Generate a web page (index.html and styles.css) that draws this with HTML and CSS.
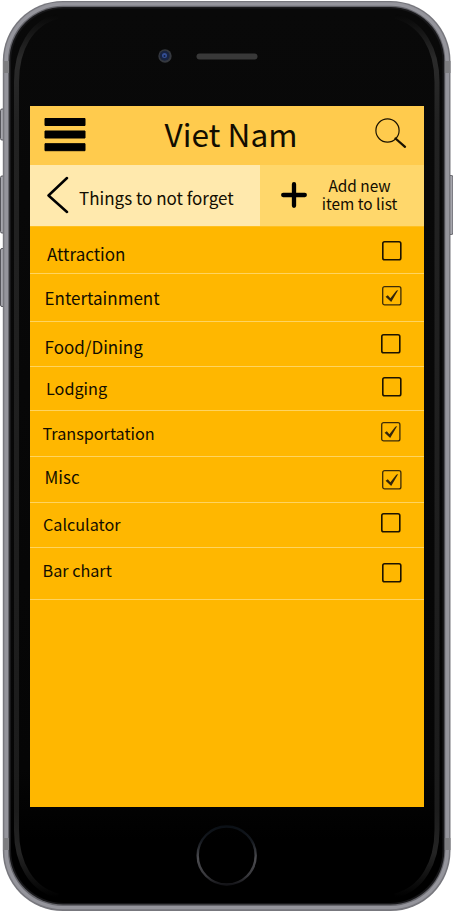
FILE: index.html
```html
<!DOCTYPE html>
<html lang="en">
<head>
<meta charset="utf-8">
<title>Viet Nam</title>
<link rel="stylesheet" href="styles.css">
</head>
<body>
<svg width="0" height="0" class="defs" aria-hidden="true">
  <symbol id="box" viewBox="0 0 20 20"><rect x=".8" y=".8" width="18" height="18" rx="1.8" fill="none" stroke="#1c1300" stroke-width="1.6"/></symbol>
  <symbol id="checked" viewBox="0 0 20 20"><rect x=".7" y=".7" width="18.200" height="18.200" rx="2" fill="none" stroke="#3c2c08" stroke-width="1.300"/><path d="M3.600 10.800 5.800 9.300 8.400 12.200 14.300 4.700 16.200 4 9.200 16Z" fill="#33260c"/></symbol>
</svg>
<div class="phone">
  <svg class="frame" viewBox="0 0 453 912" aria-hidden="true">
    <defs>
      <linearGradient id="sheen" gradientUnits="userSpaceOnUse" x1="0" y1="15" x2="0" y2="897">
        <stop offset="0" stop-color="#080808"/><stop offset=".05" stop-color="#2a2a2a"/>
        <stop offset=".12" stop-color="#222"/><stop offset=".9" stop-color="#1c1c1c"/>
        <stop offset=".95" stop-color="#242424"/><stop offset="1" stop-color="#000"/>
      </linearGradient>
      <linearGradient id="glass" x1="0" y1="0" x2="0" y2="1">
        <stop offset="0" stop-color="#090909"/><stop offset=".85" stop-color="#050505"/><stop offset=".93" stop-color="#000"/>
      </linearGradient>
      <linearGradient id="ring" x1="0" y1="0" x2="0" y2="1">
        <stop offset="0" stop-color="#0b1016"/><stop offset=".25" stop-color="#15191f"/><stop offset=".55" stop-color="#4c4c50"/><stop offset=".85" stop-color="#38383c"/><stop offset="1" stop-color="#141418"/>
      </linearGradient>
    </defs>
    <g fill="#a6a6ad" stroke="#55555b" stroke-width="1">
      <rect x=".5" y="109" width="5" height="31" rx="1.5"/>
      <rect x=".5" y="176" width="5" height="57" rx="1.5"/>
      <rect x=".5" y="248.500" width="5" height="58" rx="1.5"/>
      <rect x="448" y="175.500" width="5" height="59" rx="1.500"/>
    </g>
    <rect x="2.800" y="1" width="447.700" height="910" rx="60" fill="#77777d"/>
    <rect x="4.300" y="2.300" width="444.700" height="907" rx="58.500" fill="#95959c"/>
    <rect x="8" y="5.700" width="437.300" height="900.300" rx="55" fill="#66666c"/>
    <path d="M3 61h6v12H3zM444.500 61h6v12h-6zM3 838h6v12H3zM444.500 838h6v12h-6z" fill="#7d7d80"/>
    <rect x="9.300" y="7" width="435" height="897.500" rx="54" fill="#171719"/>
    <rect x="11" y="8.500" width="431.500" height="894.500" rx="52.500" fill="url(#glass)"/>
    <g fill="none" stroke="url(#sheen)" stroke-width="5">
      <path d="M58 16C31 23 16.500 49 16.500 82V830C16.500 863 31 889 58 896"/>
      <path d="M395 16C422 23 437 49 437 82V830C437 863 422 889 395 896"/>
    </g>
    <circle cx="165" cy="56" r="6.700" fill="#35383e"/>
    <circle cx="164.700" cy="55.800" r="5" fill="#182340"/>
    <circle cx="164.500" cy="55.500" r="2.500" fill="#354f96"/>
    <circle cx="164.500" cy="56" r="1" fill="#14203c"/>
    <rect x="196.500" y="53.500" width="61" height="6" rx="3" fill="#383838"/>
    <circle cx="226.700" cy="855.500" r="29" fill="none" stroke="url(#ring)" stroke-width="2.400"/>
  </svg>
  <main class="screen">
    <header class="header">
      <svg class="menu" viewBox="0 0 42 34"><path d="M1 .5h40v7H1zM1 13h40v7H1zM1 25.700h40v7H1z" stroke="#000" stroke-linejoin="round"/></svg>
      <h1 class="title">Viet Nam</h1>
      <svg class="search" viewBox="0 0 32 32"><circle cx="12.500" cy="12.500" r="11.600" fill="none" stroke="#1b1200" stroke-width="1.200"/><path d="m20.500 20.500 9.500 8.300" fill="none" stroke="#1b1200" stroke-width="2.300" stroke-linecap="round"/></svg>
    </header>
    <nav class="toolbar">
      <div class="back">
        <svg class="chevron" viewBox="0 0 22 38"><path d="M20 2 1.500 19.500 20 36" fill="none" stroke="#000" stroke-width="2.500" stroke-linecap="round" stroke-linejoin="round"/></svg>
        <span class="back-label">Things to not forget</span>
      </div>
      <div class="add">
        <svg class="plus" viewBox="0 0 26 26"><path d="M13 2.200v21.600M2.200 13h21.600" stroke="#000" stroke-width="4.300" stroke-linecap="round"/></svg>
        <span class="add-label">Add new<br>item to list</span>
      </div>
    </nav>
    <ul class="list">
      <li class="row attraction"><span class="label">Attraction</span><svg class="check"><use href="#box"/></svg></li>
      <li class="row entertainment"><span class="label">Entertainment</span><svg class="check"><use href="#checked"/></svg></li>
      <li class="row food"><span class="label">Food/Dining</span><svg class="check"><use href="#box"/></svg></li>
      <li class="row lodging"><span class="label">Lodging</span><svg class="check"><use href="#box"/></svg></li>
      <li class="row transportation"><span class="label">Transportation</span><svg class="check"><use href="#checked"/></svg></li>
      <li class="row misc"><span class="label">Misc</span><svg class="check"><use href="#checked"/></svg></li>
      <li class="row calculator"><span class="label">Calculator</span><svg class="check"><use href="#box"/></svg></li>
      <li class="row chart"><span class="label">Bar chart</span><svg class="check"><use href="#box"/></svg></li>
    </ul>
  </main>
</div>
</body>
</html>
```
FILE: styles.css
```css
* { box-sizing: border-box; }
body { margin: 0; background: #fff; overflow: hidden; color: #120d00; font-family: "Noto Sans CJK SC", "Noto Sans", sans-serif; }
.defs { position: absolute; }
.phone { position: relative; width: 453px; height: 912px; padding: 106px 29px 105px 30px; }
.frame { position: absolute; inset: 0; width: 453px; height: 912px; }
.screen { position: relative; height: 701px; background: #ffb700; }
.header { display: flex; align-items: flex-start; height: 59px; padding: 12px 17px 0 14px; background: #ffcb4d; }
.menu { width: 42px; height: 34px; flex: none; }
.title { flex: 1; margin: -3px 0 0; padding-left: 1px; text-align: center; font-size: 31.600px; line-height: 36px; font-weight: 400; white-space: nowrap; }
.search { width: 32px; height: 32px; flex: none; }
.toolbar { display: flex; height: 62px; border-bottom: 1px solid #ffc020; }
.back { display: flex; width: 229.500px; background: #ffe9ad; padding: 11px 0 0 17px; }
.chevron { width: 22px; height: 38px; flex: none; }
.back-label { padding: 12px 0 0 10px; font-size: 17px; line-height: 20px; white-space: nowrap; }
.add { display: flex; flex: 1; background: #ffd76b; padding: 0 0 0 21px; }
.plus { width: 26px; height: 26px; margin-top: 17px; flex: none; }
.add-label { width: 94px; padding-top: 11px; margin-left: 6px; text-align: center; font-size: 15.400px; line-height: 18px; white-space: nowrap; }
.list { margin: 0; padding: 0; list-style: none; }
.row { display: flex; align-items: flex-start; justify-content: space-between; padding-right: 22px; border-bottom: 1px solid #ffd45f; }
.label { font-size: 17px; line-height: 20px; white-space: nowrap; }
.check { width: 20px; height: 20px; flex: none; }
.attraction { height: 47px; padding-left: 17px; }
.attraction .label { margin-top: 17px; }
.attraction .check { margin-top: 14px; }
.entertainment { height: 48px; padding-left: 14.500px; }
.entertainment .label { margin-top: 14px; }
.entertainment .check { margin-top: 11.500px; }
.food { height: 45px; padding-left: 14.500px; padding-right: 23px; }
.food .label { margin-top: 15px; }
.food .check { margin-top: 12px; }
.lodging { height: 44px; padding-left: 16px; }
.lodging .label { margin-top: 11px; font-size: 16.200px; }
.lodging .check { margin-top: 9.500px; }
.transportation { height: 46px; padding-left: 12.500px; padding-right: 23px; }
.transportation .label { margin-top: 12px; font-size: 16.200px; }
.transportation .check { margin-top: 11px; }
.misc { height: 46px; padding-left: 14.500px; }
.misc .label { margin-top: 10px; }
.misc .check { margin-top: 13px; }
.calculator { height: 45px; padding-left: 13px; padding-right: 23px; }
.calculator .label { margin-top: 11px; font-size: 16.200px; }
.calculator .check { margin-top: 10px; }
.chart { height: 52px; padding-left: 12.500px; }
.chart .label { margin-top: 12px; font-size: 16.200px; }
.chart .check { margin-top: 15px; }
```
